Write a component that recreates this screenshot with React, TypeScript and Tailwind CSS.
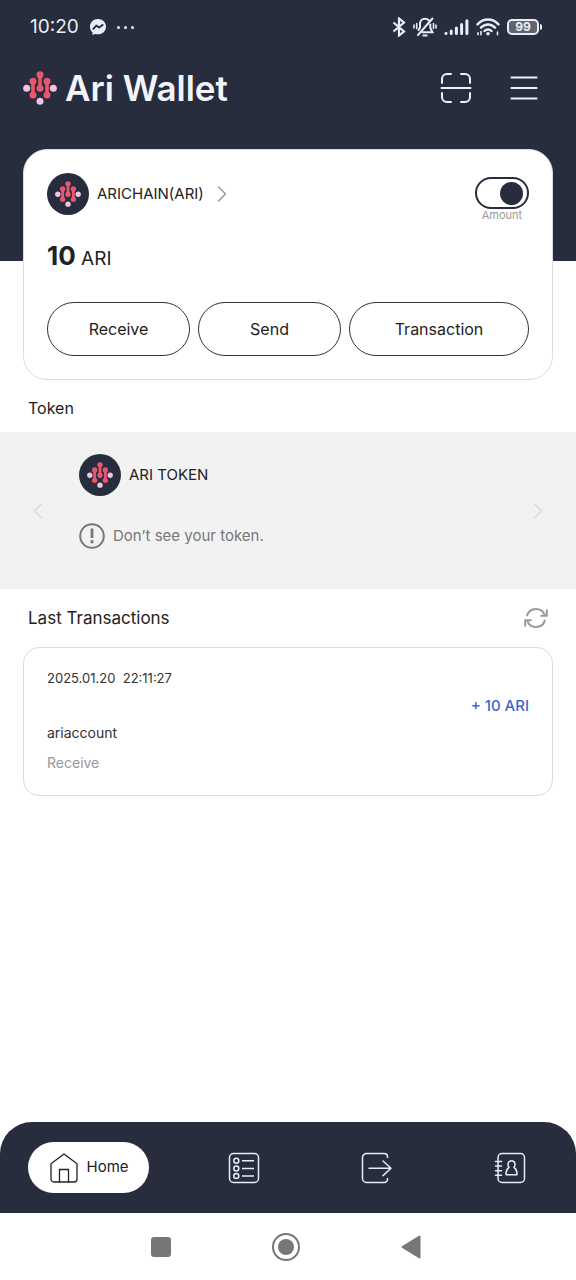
import React, { useState } from 'react';
import { ChevronLeft, ChevronRight } from 'lucide-react';

type IconProps = React.SVGProps<SVGSVGElement>;

const AriMark = (props: IconProps) => (
  <svg viewBox="0 0 102 102" aria-hidden="true" {...props}>
    <g fill="#e9576f" stroke="#e9576f">
      <path d="M51 11v41M30 31v41M72 31v41" strokeWidth="11" />
      <g stroke="none">
        <circle cx="51" cy="11" r="10.5" />
        <circle cx="51" cy="52" r="10.5" />
        <circle cx="30" cy="31" r="10.5" />
        <circle cx="30" cy="72" r="10.5" />
        <circle cx="72" cy="31" r="10.5" />
        <circle cx="72" cy="72" r="10.5" />
      </g>
    </g>
    <g fill="#f0c3e4">
      <circle cx="11" cy="52" r="10.5" />
      <circle cx="91" cy="52" r="10.5" />
      <circle cx="51" cy="91" r="10.5" />
    </g>
  </svg>
);

const Coin = () => (
  <span className="flex size-[42px] shrink-0 items-center justify-center rounded-full bg-[#272d3d]">
    <AriMark className="size-[26px]" />
  </span>
);

const MessengerIcon = () => (
  <svg viewBox="0 0 16 16" className="size-4" aria-hidden="true">
    <path d="M8 0C3.500 0 0 3.300 0 7.700c0 2.300 1 4.300 2.500 5.700V16l2.600-1.100c.9.300 1.900.4 2.900.4 4.500 0 8-3.200 8-7.600S12.500 0 8 0z" fill="#e9edf8" />
    <path d="M3.300 9.800 6.300 6.600l2.600 2 3.700-2.700" fill="none" stroke="#272d3d" strokeWidth="1.900" strokeLinejoin="round" strokeLinecap="round" />
  </svg>
);

const BluetoothIcon = () => (
  <svg viewBox="0 0 14 20" className="h-5 w-3.5" fill="none" stroke="currentColor" strokeWidth="2.2" aria-hidden="true">
    <path d="M1.500 5.500 12 14.500 7 18.500v-17L12 5.500 1.500 14.500" />
  </svg>
);

const BellOffIcon = () => (
  <svg viewBox="0 0 24 20" className="h-5 w-6" fill="none" stroke="currentColor" strokeWidth="2" strokeLinecap="round" aria-hidden="true">
    <path d="M16 3.500C15 2.300 13.700 1.700 12 1.700 9 1.700 7 4 7 7v3.500l-1.500 2.500M17.300 7.500V11l2.200 4.300H9.500M10.300 18.500h3.400" />
    <path d="M19.500 1.500 5 18" />
    <path d="M1 8v3M3.700 6.500v5M23 8v3M20.500 6.500v5" strokeWidth="1.600" />
  </svg>
);

const SignalIcon = () => (
  <svg viewBox="0 0 25 16" className="h-4 w-[25px]" stroke="currentColor" strokeWidth="3" strokeLinecap="round" aria-hidden="true">
    <path d="M2 14.200v.2M7.200 12v2.400M12.400 9v5.400M17.600 5.500v8.900M22.900 1.800v12.600" />
  </svg>
);

const WifiIcon = () => (
  <svg viewBox="0 0 24 18" className="h-[18px] w-6" fill="none" stroke="currentColor" strokeWidth="2.500" strokeLinecap="round" aria-hidden="true">
    <path d="M1.500 6.300C7.500-.2 16.500-.2 22.500 6.300M5 9.700c4-4.200 10-4.200 14 0M8.500 13c2-2.100 5-2.100 7 0" />
    <circle cx="12" cy="15.800" r="1.800" fill="currentColor" stroke="none" />
    <path d="M2 14.800v2M5 13.500v3.200M21.500 14v2.700" strokeWidth="1.600" />
  </svg>
);

const ScanIcon = () => (
  <svg viewBox="0 0 32 30" className="h-[30px] w-8" fill="none" stroke="currentColor" strokeWidth="2" strokeLinecap="round" aria-hidden="true">
    <path d="M2 10V6a5 5 0 0 1 5-5h4M21 1h4a5 5 0 0 1 5 5v4M30 20v4a5 5 0 0 1-5 5h-4M11 29H7a5 5 0 0 1-5-5v-4M1.500 15h29" />
  </svg>
);

const MenuIcon = () => (
  <svg viewBox="0 0 28 24" className="h-6 w-7" stroke="currentColor" strokeWidth="2.200" strokeLinecap="round" aria-hidden="true">
    <path d="M1.500 1.500h25M1.500 12h25M1.500 22.500h25" />
  </svg>
);

const AlertIcon = () => (
  <svg viewBox="0 0 26 26" className="size-[26px]" fill="none" stroke="#777" aria-hidden="true">
    <circle cx="13" cy="13" r="11.800" strokeWidth="2" />
    <path d="M13 5.500v9.500M13 17.300v3" strokeWidth="2.800" />
  </svg>
);

const RefreshIcon = () => (
  <svg viewBox="0 0 24 22" className="h-[22px] w-6" fill="none" stroke="#999" strokeWidth="2" aria-hidden="true">
    <path d="M3 9.300C4 4.800 7.500 2 12 2c4 0 7 2.200 8.800 5.800M21 12.700C20 17.200 16.500 20 12 20c-4 0-7-2.200-8.800-5.800" />
    <path d="M22.800 2.500v6.300h-6.500M1.200 19.500v-6.300h6.500" />
  </svg>
);

const HomeIcon = () => (
  <svg viewBox="0 0 28 30" className="h-[30px] w-7" fill="none" stroke="currentColor" strokeWidth="1.300" strokeLinejoin="round" aria-hidden="true">
    <path d="M1 10.800 14 1l13 9.800V26a3 3 0 0 1-3 3H4a3 3 0 0 1-3-3z" />
    <path d="M9.500 29V16.500h9V29" />
  </svg>
);

const ListIcon = () => (
  <svg viewBox="0 0 32 32" className="size-8" fill="none" stroke="currentColor" strokeWidth="1.500" aria-hidden="true">
    <rect x="1.500" y="1.500" width="29" height="29" rx="4" />
    <circle cx="8.300" cy="8.700" r="2.500" />
    <circle cx="8.300" cy="16.400" r="2.500" />
    <circle cx="8.300" cy="24" r="2.500" />
    <path d="M14 8.700h12M14 16.400h12M14 24h12" />
  </svg>
);

const ExitIcon = () => (
  <svg viewBox="0 0 32 32" className="size-8" fill="none" stroke="currentColor" strokeWidth="1.500" strokeLinecap="round" strokeLinejoin="round" aria-hidden="true">
    <path d="M26.500 5.500V4.800a3.300 3.300 0 0 0-3.300-3.300H5.500a4 4 0 0 0-4 4v21a4 4 0 0 0 4 4h17.700a3.300 3.300 0 0 0 3.300-3.300v-.7" />
    <path d="M8 16.300h22M22 9l8 7.300-8 7.300" />
  </svg>
);

const ContactsIcon = () => (
  <svg viewBox="0 0 32 32" className="size-8" fill="none" stroke="currentColor" strokeWidth="1.500" strokeLinecap="round" strokeLinejoin="round" aria-hidden="true">
    <rect x="4" y="1.500" width="26.500" height="29" rx="4" />
    <path d="M1.500 9.500h6M1.500 14h6M1.500 18.700h6M1.500 23.300h6" />
    <path d="M15 15.300c-2-2.600-.9-6.500 2.500-6.500s4.500 3.900 2.500 6.500c2.200 1.500 3.200 4 2.900 7.400H12.100c-.3-3.400.7-5.900 2.900-7.400z" />
  </svg>
);

const StatusBar = () => (
  <div className="flex h-[54px] items-center justify-between pl-[30px] pr-[34px] text-[#e9edf8]">
    <div className="flex items-center gap-[11px]">
      <span className="text-[19px] leading-6">10:20</span>
      <MessengerIcon />
      <span className="flex items-center gap-1">
        <i className="size-[3px] rounded-full bg-current" />
        <i className="size-[3px] rounded-full bg-current" />
        <i className="size-[3px] rounded-full bg-current" />
      </span>
    </div>
    <div className="flex items-center gap-[7px]">
      <BluetoothIcon />
      <BellOffIcon />
      <SignalIcon />
      <WifiIcon />
      <div className="flex items-center gap-px">
        <span className="flex h-4 w-8 items-center justify-center rounded-[5px] border-2 border-current bg-[#60646f] text-xs font-bold leading-3">
          99
        </span>
        <i className="h-1.5 w-0.5 rounded-r-full bg-current" />
      </div>
    </div>
  </div>
);

const AppBar = () => (
  <div className="flex h-[68px] items-center justify-between pl-[23px] pr-[38px]">
    <h1 className="flex items-center gap-2 text-[35px] font-semibold leading-10 text-[#f1f4fd]">
      <AriMark className="size-[34px]" />
      Ari Wallet
    </h1>
    <div className="flex items-center gap-[38px] text-[#eef1fa]">
      <button type="button" aria-label="Scan code">
        <ScanIcon />
      </button>
      <button type="button" aria-label="Menu">
        <MenuIcon />
      </button>
    </div>
  </div>
);

const actionClass = 'h-[54px] rounded-full border border-[#333] text-base leading-6 text-[#222]';

const BalanceCard = () => {
  const [showAmount, setShowAmount] = useState(true);

  return (
    <section className="mx-[23px] -mt-28 rounded-3xl border border-[#dcdcdc] bg-white p-[23px]">
      <div className="flex items-start justify-between">
        <button type="button" className="flex items-center gap-2 text-[15px] text-[#222]">
          <Coin />
          ARICHAIN(ARI)
          <ChevronRight className="-ml-1 size-7 text-[#999]" strokeWidth={1.25} />
        </button>
        <label className="flex flex-col items-center pt-1 text-[11px] leading-3 text-[#999]">
          <input
            type="checkbox"
            role="switch"
            checked={showAmount}
            onChange={(e) => setShowAmount(e.target.checked)}
            className="flex h-8 w-[54px] appearance-none items-center rounded-full border-2 border-[#272d3d] px-1 before:size-[23px] before:rounded-full before:bg-[#272d3d] checked:justify-end"
          />
          Amount
        </label>
      </div>
      <p className="mt-[19px] text-[19px] leading-8 text-[#222]">
        <strong className="text-[26px] font-bold">10</strong> ARI
      </p>
      <div className="mt-[27px] grid grid-cols-[143fr_143fr_180fr] gap-2">
        <button type="button" className={actionClass}>Receive</button>
        <button type="button" className={actionClass}>Send</button>
        <button type="button" className={actionClass}>Transaction</button>
      </div>
    </section>
  );
};

const TokenSection = () => (
  <section>
    <h2 className="px-7 pt-4 pb-3 text-base leading-6 text-[#222]">Token</h2>
    <div className="flex items-center justify-between bg-[#f2f2f2] px-6">
      <button type="button" aria-label="Previous token" className="text-[#d9d9d9]">
        <ChevronLeft className="size-7" strokeWidth={1.25} />
      </button>
      <div className="grow px-[27px] pt-[22px] pb-10">
        <div className="flex items-center gap-2 text-[15px] text-[#222]">
          <Coin />
          ARI TOKEN
        </div>
        <p className="mt-[27px] flex items-center gap-2 text-[15px] leading-6 text-[#777]">
          <AlertIcon />
          Don’t see your token.
        </p>
      </div>
      <button type="button" aria-label="Next token" className="text-[#d9d9d9]">
        <ChevronRight className="size-7" strokeWidth={1.25} />
      </button>
    </div>
  </section>
);

const LastTransactions = () => (
  <section>
    <div className="flex h-[58px] items-center justify-between px-7">
      <h2 className="text-[17px] leading-6 text-[#222]">Last Transactions</h2>
      <button type="button" aria-label="Refresh transactions">
        <RefreshIcon />
      </button>
    </div>
    <article className="mx-[23px] rounded-2xl border border-[#dcdcdc] px-[23px] pt-5 pb-[22px] text-sm leading-5 text-[#333]">
      <time dateTime="2025-01-20T22:11:27" className="block whitespace-pre text-[13px]">2025.01.20  22:11:27</time>
      <p className="mt-1.5 text-right text-[15px] font-medium leading-6 text-[#3f66cf]">+ 10 ARI</p>
      <p className="mt-[5px]">ariaccount</p>
      <p className="mt-2.5 text-[#999]">Receive</p>
    </article>
  </section>
);

const BottomNav = () => (
  <nav className="grid h-[91px] grid-cols-[177fr_133fr_133fr_133fr] place-items-center rounded-t-[32px] bg-[#272d3d] text-[#e9edf8]">
    <a href="#home" className="flex h-[51px] items-center gap-2 rounded-full bg-white pl-[22px] pr-5 text-[15px] text-[#222]">
      <HomeIcon />
      Home
    </a>
    <a href="#history" aria-label="History">
      <ListIcon />
    </a>
    <a href="#send" aria-label="Send">
      <ExitIcon />
    </a>
    <a href="#contacts" aria-label="Contacts">
      <ContactsIcon />
    </a>
  </nav>
);

const SystemNav = () => (
  <div className="grid h-[67px] grid-cols-3 place-items-center bg-white pl-[98px] pr-[102px] text-[#777]">
    <button type="button" aria-label="Recent apps" className="size-5 rounded-[3px] bg-current" />
    <button type="button" aria-label="Home screen" className="flex size-7 items-center justify-center rounded-full border-2 border-current">
      <i className="size-4 rounded-full bg-current" />
    </button>
    <button type="button" aria-label="Back">
      <svg viewBox="0 0 20 24" className="h-6 w-5" fill="currentColor" stroke="currentColor" strokeWidth="2" strokeLinejoin="round" aria-hidden="true">
        <path d="M1.500 12 18.500 1.500v21z" />
      </svg>
    </button>
  </div>
);

export default function App() {
  return (
    <div className="flex min-h-screen flex-col bg-white font-['Inter','Liberation_Sans',sans-serif]">
      <header className="bg-[#272d3d] pb-[139px]">
        <StatusBar />
        <AppBar />
      </header>
      <main>
        <BalanceCard />
        <TokenSection />
        <LastTransactions />
      </main>
      <footer className="mt-auto">
        <BottomNav />
        <SystemNav />
      </footer>
    </div>
  );
}
